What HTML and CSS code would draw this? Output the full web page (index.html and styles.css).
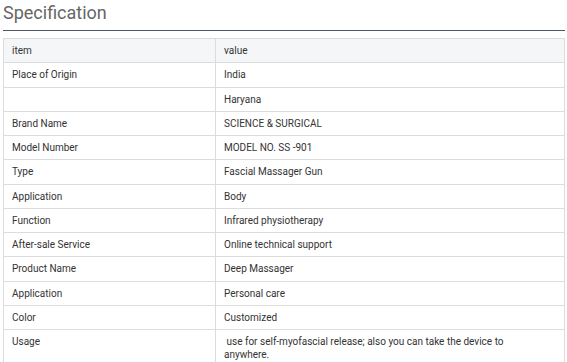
FILE: index.html
```html
<!DOCTYPE html>
<html>
<head>
<meta charset="utf-8">
<link rel="stylesheet" href="styles.css">
</head>
<body>
<div class="spec">
  <h2 class="spec-title">Specification</h2>
  <table class="spec-table">
    <tr class="head"><td class="k">item</td><td class="v">value</td></tr>
    <tr><td class="k">Place of Origin</td><td class="v">India</td></tr>
    <tr><td class="k"></td><td class="v">Haryana</td></tr>
    <tr><td class="k">Brand Name</td><td class="v">SCIENCE &amp; SURGICAL</td></tr>
    <tr><td class="k">Model Number</td><td class="v">MODEL NO. SS -901</td></tr>
    <tr><td class="k">Type</td><td class="v">Fascial Massager Gun</td></tr>
    <tr><td class="k">Application</td><td class="v">Body</td></tr>
    <tr><td class="k">Function</td><td class="v">Infrared physiotherapy</td></tr>
    <tr><td class="k">After-sale Service</td><td class="v">Online technical support</td></tr>
    <tr><td class="k">Product Name</td><td class="v">Deep Massager</td></tr>
    <tr><td class="k">Application</td><td class="v">Personal care</td></tr>
    <tr><td class="k">Color</td><td class="v">Customized</td></tr>
    <tr><td class="k">Usage</td><td class="v">&nbsp;use for self-myofascial release; also you can take the device to anywhere.</td></tr>
  </table>
</div>
</body>
</html>
```
FILE: styles.css
```css
html, body { margin: 0; padding: 0; background: #fff; }
body { font-family: Roboto, "Liberation Sans", sans-serif; }
.spec { padding: 0 2px 0 3px; }
.spec-title {
  margin: 0;
  font-size: 18px;
  font-weight: 400;
  color: #666;
  line-height: 26px;
  height: 30px;
  border-bottom: 1px solid #4c5866;
}
.spec-table {
  margin-top: 7px;
  width: 100%;
  border-collapse: collapse;
  table-layout: fixed;
  font-size: 10px;
  color: #333;
}
.spec-table td {
  border: 1px solid #dcdcdc;
  padding: 5px 8px;
  line-height: 13.25px;
  vertical-align: top;
}
.spec-table td.k { width: 195px; }
.spec-table td.v { padding-right: 40px; }
.spec-table tr.head td { background: #f5f6f8; }
```
